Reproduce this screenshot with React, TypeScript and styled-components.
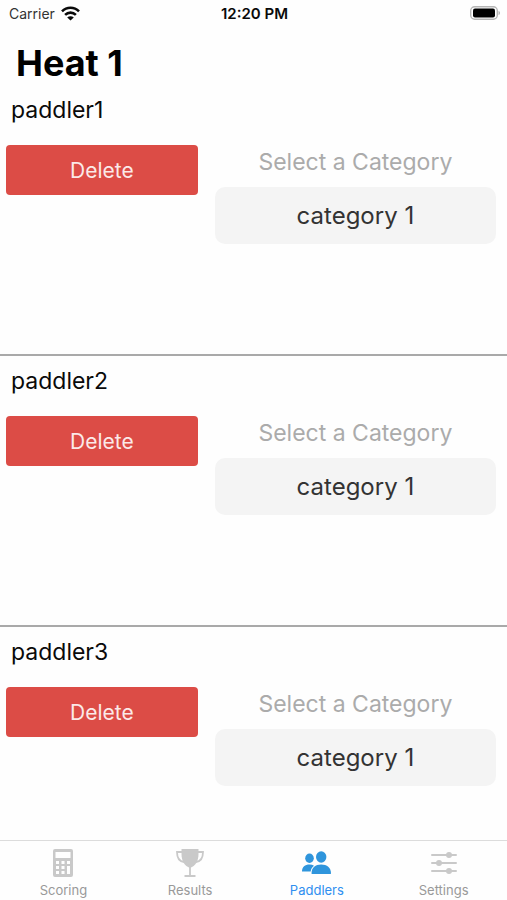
import React, { useState } from "react";
import styled, { createGlobalStyle } from "styled-components";

const GlobalStyle = createGlobalStyle`
  *, *::before, *::after { box-sizing: border-box; }
  body {
    margin: 0;
    background: #fefefe;
    color: #0a0a0a;
    font-family: Inter, "Liberation Sans", sans-serif;
  }
`;

const Screen = styled.div`
  display: flex;
  flex-direction: column;
  height: 100vh;
`;

const StatusBar = styled.header`
  display: grid;
  grid-template-columns: 1fr auto 1fr;
  align-items: center;
  flex: none;
  height: 26px;
  padding: 0 7px 0 9px;
  font-size: 14px;
`;

const Carrier = styled.span`
  display: flex;
  align-items: center;
  gap: 6px;
  color: #333;
`;

const Clock = styled.time`
  font-size: 15px;
  font-weight: 600;
`;

const BatteryIcon = styled.svg`
  justify-self: end;
`;

const Content = styled.main`
  flex: 1;
  min-height: 0;
  overflow-y: auto;
  scrollbar-width: none;
`;

const Title = styled.h1`
  margin: 0;
  padding: 15px 16px 0;
  font-size: 36px;
  line-height: 44px;
  font-weight: 700;
  color: #000;
`;

const PaddlerList = styled.ul`
  margin: 0;
  padding: 0;
  list-style: none;
`;

const PaddlerRow = styled.li`
  min-height: 271px;
  border-bottom: 2px solid #a9a9a9;
`;

const PaddlerName = styled.h2`
  margin: 0;
  padding: 8px 11px;
  font-size: 23px;
  line-height: 34px;
  font-weight: 400;
`;

const Controls = styled.div`
  display: grid;
  grid-template-columns: 2fr 3fr;
  padding-top: 10px;
`;

const DeleteCell = styled.div`
  padding: 0 5px 0 6px;
`;

const DeleteButton = styled.button`
  display: block;
  width: 100%;
  height: 50px;
  padding: 0;
  border: 0;
  border-radius: 4px;
  background: #dc4c46;
  color: #fbe9e8;
  font: inherit;
  font-size: 21px;
  cursor: pointer;
`;

const CategoryCell = styled.div`
  display: flex;
  flex-direction: column;
  padding: 0 11px 0 12px;
`;

const CategoryLabel = styled.label`
  padding: 0 0 8px;
  font-size: 23px;
  line-height: 34px;
  text-align: center;
  color: #ababab;
`;

const CategorySelect = styled.select`
  appearance: none;
  width: 100%;
  height: 57px;
  padding: 0;
  border: 0;
  border-radius: 10px;
  background: #f4f4f4;
  color: #333;
  font: inherit;
  font-size: 24px;
  text-align: center;
  text-align-last: center;
`;

const TabBar = styled.nav`
  display: grid;
  grid-template-columns: repeat(4, 1fr);
  flex: none;
  height: 60px;
  border-top: 1px solid #dcdcdc;
`;

const Tab = styled.a<{ $active?: boolean }>`
  display: flex;
  flex-direction: column;
  align-items: center;
  gap: 2px;
  padding-top: 6px;
  font-size: 13px;
  line-height: 18px;
  text-decoration: none;
  color: ${(p) => (p.$active ? "#2f8ff0" : "#999")};

  svg {
    color: ${(p) => (p.$active ? "#2f95dc" : "#c9c9c9")};
  }
`;

const WifiIcon = () => (
  <svg width="19" height="15" viewBox="0 0 19 15" aria-hidden="true" fill="none" stroke="#0a0a0a" strokeWidth="2.6">
    <path d="M1 5.400C5.800.600 13.200.600 18 5.400" />
    <path d="M4.100 8.900C7.200 5.900 11.800 5.900 14.900 8.900" />
    <path d="M9.500 14.600 6.200 11.400C8 9.700 11 9.700 12.800 11.400Z" fill="#0a0a0a" stroke="none" />
  </svg>
);

const CalculatorIcon = () => (
  <svg width="32" height="32" viewBox="0 0 32 32" aria-hidden="true">
    <path
      fill="currentColor"
      fillRule="evenodd"
      d="M8 2h16a2 2 0 0 1 2 2v24a2 2 0 0 1-2 2H8a2 2 0 0 1-2-2V4a2 2 0 0 1 2-2ZM8.500 5v6h15V5ZM9 14v3h3v-3ZM14.500 14v3h3v-3ZM20 14v3h3v-3ZM9 19v3h3v-3ZM14.500 19v3h3v-3ZM20 19v8h3v-8ZM9 24v3h3v-3ZM14.500 24v3h3v-3Z"
    />
  </svg>
);

const TrophyIcon = () => (
  <svg width="32" height="32" viewBox="0 0 32 32" aria-hidden="true">
    <path fill="currentColor" d="M7.500 2h17v5c0 7-3 12-8.500 14C10.500 19 7.500 14 7.500 7Z" />
    <path
      fill="none"
      stroke="currentColor"
      strokeWidth="1.800"
      d="M8 5H3c0 6 2.500 9.500 7 10M24 5h5c0 6-2.500 9.500-7 10M16 20v9M10.500 29h11"
    />
  </svg>
);

const PeopleIcon = () => (
  <svg width="32" height="32" viewBox="0 0 32 32" aria-hidden="true" fill="currentColor">
    <ellipse cx="8.500" cy="11.300" rx="4.300" ry="4.700" />
    <path d="M1 24.500c0-4.500 3-7 7.500-7 1.800 0 3.300.4 4.500 1.200-2 1.400-3 3.300-3.300 5.800Z" />
    <ellipse cx="20.200" cy="10" rx="5.200" ry="5.700" />
    <path d="M10.500 26.500c0-6 4-9 9.700-9s9.800 3 9.800 9c0 .3-.2.500-.5.500H11c-.3 0-.5-.2-.5-.5Z" />
  </svg>
);

const SlidersIcon = () => (
  <svg width="32" height="32" viewBox="0 0 32 32" aria-hidden="true" fill="currentColor">
    <path fill="none" stroke="currentColor" strokeWidth="2" strokeLinecap="round" d="M4 8h24M4 16h24M4 24h24" />
    <circle cx="21" cy="8" r="3" />
    <circle cx="11" cy="16" r="3" />
    <circle cx="21" cy="24" r="3" />
  </svg>
);

const TABS = [
  { id: "scoring", label: "Scoring", Icon: CalculatorIcon },
  { id: "results", label: "Results", Icon: TrophyIcon },
  { id: "paddlers", label: "Paddlers", Icon: PeopleIcon },
  { id: "settings", label: "Settings", Icon: SlidersIcon },
];

export default function App() {
  const [paddlers, setPaddlers] = useState(["paddler1", "paddler2", "paddler3"]);

  return (
    <Screen>
      <GlobalStyle />
      <StatusBar>
        <Carrier>
          Carrier
          <WifiIcon />
        </Carrier>
        <Clock>12:20 PM</Clock>
        <BatteryIcon width="30" height="14" viewBox="0 0 30 14" role="img" aria-label="Battery full">
          <rect x="0.700" y="0.700" width="26.600" height="12.600" rx="4" fill="#fff" stroke="#b5b5b5" strokeWidth="1.400" />
          <rect x="3" y="2.500" width="22" height="9" rx="2" fill="#000" />
          <path d="M28.500 5v4c2-.8 2-3.200 0-4Z" fill="#b5b5b5" />
        </BatteryIcon>
      </StatusBar>

      <Content>
        <Title>Heat 1</Title>
        <PaddlerList>
          {paddlers.map((name) => (
            <PaddlerRow key={name}>
              <PaddlerName>{name}</PaddlerName>
              <Controls>
                <DeleteCell>
                  <DeleteButton type="button" onClick={() => setPaddlers(paddlers.filter((p) => p !== name))}>
                    Delete
                  </DeleteButton>
                </DeleteCell>
                <CategoryCell>
                  <CategoryLabel htmlFor={`category-${name}`}>Select a Category</CategoryLabel>
                  <CategorySelect id={`category-${name}`}>
                    <option>category 1</option>
                  </CategorySelect>
                </CategoryCell>
              </Controls>
            </PaddlerRow>
          ))}
        </PaddlerList>
      </Content>

      <TabBar>
        {TABS.map(({ id, label, Icon }) => (
          <Tab key={id} href={`#${id}`} $active={id === "paddlers"} aria-current={id === "paddlers" ? "page" : undefined}>
            <Icon />
            {label}
          </Tab>
        ))}
      </TabBar>
    </Screen>
  );
}
